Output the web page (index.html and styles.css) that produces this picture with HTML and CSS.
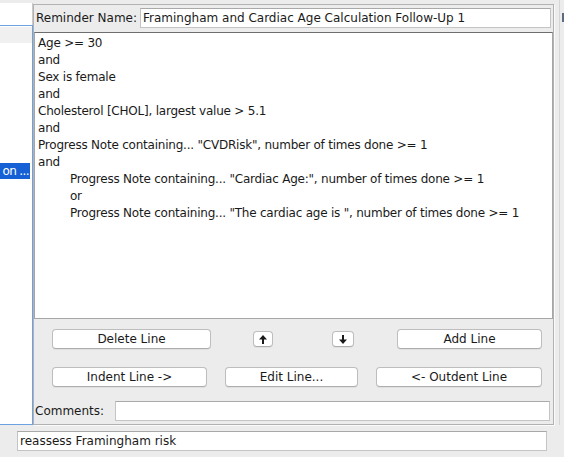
FILE: index.html
```html
<!DOCTYPE html>
<html>
<head>
<meta charset="utf-8">
<link rel="stylesheet" href="styles.css">
</head>
<body>
<div class="window">
  <div class="main">
    <div class="left">
      <div class="left-head"></div>
      <div class="list">
        <div class="row stripe"></div>
        <div class="row"></div>
        <div class="row"></div>
        <div class="row"></div>
        <div class="row"></div>
        <div class="row"></div>
        <div class="row"></div>
        <div class="row"></div>
        <div class="row selected"><span class="sel-text">on ...</span></div>
      </div>
    </div>
    <div class="panel">
      <div class="name-row">
        <span class="name-label">Reminder Name:</span>
        <div class="field name-field">Framingham and Cardiac Age Calculation Follow-Up 1</div>
      </div>
      <div class="textarea">
        <div class="line">Age &gt;= 30</div>
        <div class="line">and</div>
        <div class="line">Sex is female</div>
        <div class="line">and</div>
        <div class="line">Cholesterol [CHOL], largest value &gt; 5.1</div>
        <div class="line">and</div>
        <div class="line">Progress Note containing... "CVDRisk", number of times done &gt;= 1</div>
        <div class="line">and</div>
        <div class="line indent">Progress Note containing... "Cardiac Age:", number of times done &gt;= 1</div>
        <div class="line indent">or</div>
        <div class="line indent">Progress Note containing... "The cardiac age is ", number of times done &gt;= 1</div>
      </div>
      <div class="btn-row row1">
        <button class="btn b-delete">Delete Line</button>
        <button class="btn arrow b-up"><svg width="8" height="9" viewBox="0 0 8 9"><path d="M4 0 L8 4.6 L5 4.6 L5 9 L3 9 L3 4.6 L0 4.6 Z" fill="#1a1a1a"/></svg></button>
        <button class="btn arrow b-down"><svg width="8" height="9" viewBox="0 0 8 9"><path d="M4 9 L8 4.4 L5 4.4 L5 0 L3 0 L3 4.4 L0 4.4 Z" fill="#1a1a1a"/></svg></button>
        <button class="btn b-add">Add Line</button>
      </div>
      <div class="btn-row row2">
        <button class="btn b-indent">Indent Line -&gt;</button>
        <button class="btn b-edit">Edit Line...</button>
        <button class="btn b-outdent">&lt;- Outdent Line</button>
      </div>
      <div class="comments-row">
        <span class="comments-label">Comments:</span>
        <div class="field comments-field"></div>
      </div>
    </div>
    <div class="right-strip">
      <div class="strip-line"></div>
      <div class="strip-edge"><div class="strip-mark"></div></div>
    </div>
  </div>
  <div class="field bottom-field">reassess Framingham risk</div>
</div>
</body>
</html>
```
FILE: styles.css
```css
* { box-sizing: border-box; }

body {
  margin: 0;
  width: 564px;
  height: 457px;
  overflow: hidden;
  background: #ececec;
  font-family: "DejaVu Sans", "Liberation Sans", sans-serif;
  font-size: 12px;
  color: #1a1a1a;
}

.window {
  display: flex;
  flex-direction: column;
}

.main {
  display: flex;
  height: 425px;
}

/* left list column */
.left {
  width: 33px;
  display: flex;
  flex-direction: column;
  padding-top: 3px;
}

.left-head {
  height: 22px;
  background: #fff;
  border-right: 1px solid #c9c9c9;
}

.list {
  flex: 1;
  background: #fff;
  border: 1px solid #6da2e2;
  border-left: none;
  padding-top: 1px;
}

.row {
  height: 16px;
  margin-bottom: 1px;
  line-height: 16px;
  display: flex;
  justify-content: flex-end;
  white-space: nowrap;
}

.row.stripe { background: #f0f0f0; }

.row.selected {
  background: #1660d6;
  color: #fff;
  margin-right: 2px;
  padding-right: 1px;
}

.sel-text {
  letter-spacing: -0.6px;
}

/* main panel */
.panel {
  width: 521px;
  height: 421px;
  margin-top: 4px;
  border: 1px solid #b2b2b2;
  box-shadow: 1px 1px 0 #fbfbfb;
  display: flex;
  flex-direction: column;
}

.field {
  background: #fff;
  border: 1px solid #c4c4c4;
  border-top-color: #a9a9a9;
  height: 20px;
  line-height: 18px;
  padding-left: 2px;
  white-space: nowrap;
  overflow: hidden;
}

.name-row {
  display: flex;
  align-items: center;
  margin-top: 3px;
  height: 20px;
}

.name-label {
  width: 106px;
  padding-left: 2px;
}

.name-field { width: 411px; }

.textarea {
  margin-top: 4px;
  width: 519px;
  height: 287px;
  background: #fff;
  border: 1px solid #a6a6a6;
  border-top-color: #6e6e6e;
  padding: 2px 3px;
}

.line {
  height: 17px;
  line-height: 17px;
  white-space: nowrap;
  letter-spacing: -0.22px;
}

.line.indent { padding-left: 32px; }

.btn-row {
  display: flex;
  align-items: center;
  height: 20px;
}

.row1 { margin-top: 10px; }
.row2 { margin-top: 18px; }

.btn {
  height: 20px;
  padding: 0;
  background: #fff;
  border: 1px solid #bdbdbd;
  border-bottom-color: #adadad;
  border-radius: 4px;
  box-shadow: 0 1px 0 rgba(0,0,0,0.05);
  font-family: inherit;
  font-size: 12px;
  color: #1a1a1a;
  text-align: center;
  line-height: 18px;
}

.arrow {
  height: 16px;
  display: flex;
  align-items: center;
  justify-content: center;
}

.b-delete { margin-left: 18px; width: 159px; }
.b-up { margin-left: 42px; width: 20px; }
.b-down { margin-left: 59px; width: 22px; }
.b-add { margin-left: 43px; width: 145px; }

.b-indent { margin-left: 18px; width: 155px; }
.b-edit { margin-left: 18px; width: 133px; }
.b-outdent { margin-left: 18px; width: 166px; }

.comments-row {
  display: flex;
  align-items: center;
  margin-top: 14px;
  height: 20px;
}

.comments-label {
  width: 81px;
  padding-left: 1px;
}

.comments-field { width: 435px; }

/* right edge strip */
.right-strip {
  width: 10px;
  display: flex;
  padding-left: 5px;
}

.strip-line {
  width: 1px;
  background: #d6d6d6;
}

.strip-edge {
  flex: 1;
  display: flex;
  justify-content: flex-end;
  padding-top: 13px;
}

.strip-mark {
  width: 2px;
  height: 9px;
  background: #5d6b7e;
}

.bottom-field {
  margin-top: 6px;
  margin-left: 17px;
  width: 530px;
}
```
